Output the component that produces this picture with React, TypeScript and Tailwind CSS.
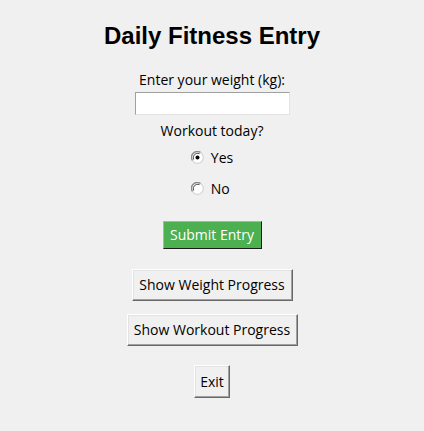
function Radio({ checked, label }: { checked: boolean; label: string }) {
  return (
    <label className="flex items-center gap-[7px] h-[16px] text-[14px] text-black font-['Open_Sans',sans-serif]">
      <svg width="13" height="13" viewBox="0 0 13 13">
        <circle cx="6.5" cy="6.5" r="5.8" fill="#ffffff" stroke="#d4d4d4" strokeWidth="1.2" />
        <path d="M1.4 9.4A5.8 5.8 0 0 1 9.4 1.4" fill="none" stroke="#8a8a8a" strokeWidth="1.3" />
        <path d="M2.6 8.5A4.5 4.5 0 0 1 8.5 2.6" fill="none" stroke="#505050" strokeWidth="1" />
        {checked && <circle cx="6.5" cy="6.5" r="2" fill="#000" />}
      </svg>
      <span>{label}</span>
    </label>
  );
}

const btn =
  "bg-[#f0f0f0] text-[14px] text-black leading-none font-['Open_Sans',sans-serif] border border-t-white border-l-white border-r-[#696969] border-b-[#696969] shadow-[inset_-1px_-1px_0_#a0a0a0,inset_1px_1px_0_#e3e3e3]";

export default function App() {
  return (
    <div className="w-[424px] h-[431px] bg-[#f0f0f0] flex flex-col items-center">
      <h1 className="mt-[22px] text-[24px] leading-[28px] font-bold text-black font-['Liberation_Sans',Arial,sans-serif]">
        Daily Fitness Entry
      </h1>

      <p className="mt-[20px] text-[14px] leading-[19px] text-black font-['Open_Sans',sans-serif]">
        Enter your weight (kg):
      </p>
      <input className="mt-[3px] w-[155px] h-[23px] bg-white border border-t-[#a0a0a0] border-l-[#a0a0a0] border-r-[#e3e3e3] border-b-[#e3e3e3] outline-none px-1 text-[14px] font-['Open_Sans',sans-serif]" />

      <p className="mt-[6px] text-[14px] leading-[19px] text-black font-['Open_Sans',sans-serif]">
        Workout today?
      </p>
      <div className="mt-[9px] flex flex-col items-start gap-[15px]">
        <Radio checked label="Yes" />
        <Radio checked={false} label="No" />
      </div>

      <button className="mt-[25px] w-[99px] h-[28px] bg-[#4caf50] text-white text-[14px] leading-none font-['Open_Sans',sans-serif] border border-t-[#7fd483] border-l-[#7fd483] border-r-[#1b1b1b] border-b-[#1b1b1b]">
        Submit Entry
      </button>

      <button className={`mt-[20px] w-[161px] h-[32px] ${btn}`}>Show Weight Progress</button>

      <button className={`mt-[13px] w-[171px] h-[32px] ${btn}`}>Show Workout Progress</button>

      <button className={`mt-[19px] w-[36px] h-[33px] ${btn}`}>Exit</button>
    </div>
  );
}
